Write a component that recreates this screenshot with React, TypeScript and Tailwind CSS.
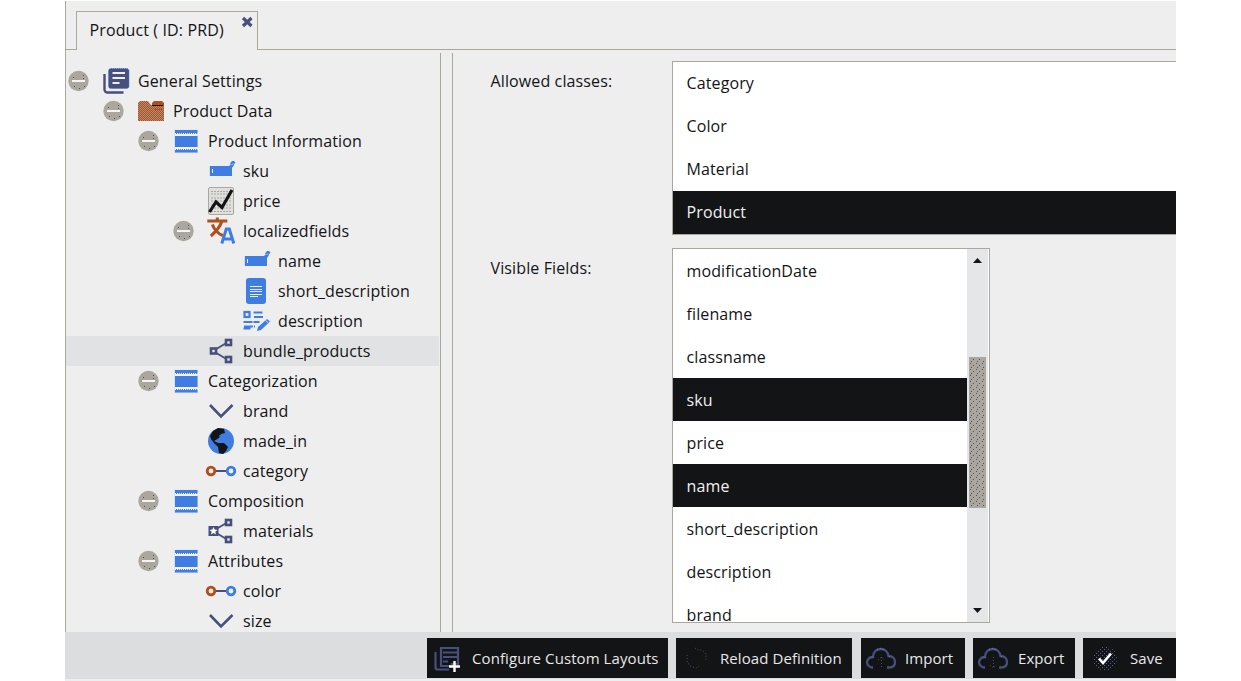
import type { ReactNode } from 'react';

type IconName = 'layers' | 'folder' | 'fieldset' | 'input' | 'chart' | 'translate' | 'textarea' | 'wysiwyg' | 'relations' | 'select' | 'globe' | 'relation' | 'advanced';

const NAVY = '#474f7d';
const BLUE = '#3f7de3';
const RUST = '#ae4f1d';
const STONE = '#aca79d';
const INK = '#131416';

const icons: Record<IconName, ReactNode> = {
  layers: (
    <>
      <path d="M4.500 8v15.500a3 3 0 0 0 3 3H23.500" fill="none" stroke={NAVY} strokeWidth="2.400" />
      <rect x="8.500" y="2.500" width="20.500" height="20" rx="2.500" fill={NAVY} />
      <rect x="8.500" y="2.500" width="20.500" height="20" rx="2.500" fill="none" stroke={BLUE} strokeDasharray="1 1" />
      <path d="M12.500 7h12.500M12.500 12h12.500M12.500 17h7" stroke="#ededed" strokeWidth="2" />
    </>
  ),
  folder: (
    <>
      <path d="M3 7l2-2h8l3 4h13v16H3z" fill="url(#weave)" />
      <path d="M17 9.500V7l2-2h8l2 2v3H17z" fill={RUST} />
      <path d="M17 9.500h11" stroke={INK} />
      <path d="M20 13.500h8M22 16.500h5" stroke={RUST} strokeDasharray="1 1" />
    </>
  ),
  fieldset: (
    <>
      <path d="M4 3.500h24v23.500H4z" fill="#dddede" />
      <path d="M5 4h22.500v3H5zM5 10h22.500v11H5zM5 24h22.500v2.500H5z" fill={BLUE} />
      <path d="M5 8.500h22.500M5 22.500h22.500" stroke="#f3f3f3" strokeWidth="3" />
      <path d="M6 7.500h21M6 23.500h21" stroke={BLUE} strokeDasharray="1 1" />
    </>
  ),
  input: (
    <>
      <path d="M5 10h19l3-3 2 2-2 3v8H5z" fill={BLUE} />
      <path d="M25 7.500l2-2.500h2l1.500 1.500-2.500 3z" fill={BLUE} />
      <path d="M7.500 13v4" stroke="#edf0f5" />
      <path d="M4.500 10v10" stroke="#d5dbe7" />
      <path d="M26.500 9l1.500-1.500" stroke="#c8d6f2" />
    </>
  ),
  chart: (
    <>
      <rect x="3.500" y="1.500" width="25" height="27" rx="1.500" fill="#dfdfdf" stroke={STONE} />
      <path d="M6 5.500h20M6 8h20M6 12h20M6 15h20M6 19h20M6 22h20M6 25.500h20" stroke={STONE} strokeDasharray="2 1" />
      <path d="M4.500 26l6.500-10 6 5.500L27 4" fill="none" stroke={INK} strokeWidth="3.200" />
    </>
  ),
  translate: (
    <g transform="translate(-.7 -.5)">
      <path d="M3 5.500h20M13 2v4M6.500 20.500C10.500 17 15.500 12 17.500 6M8 9c2 5 5 9 10.500 11" fill="none" stroke={RUST} strokeWidth="3" />
      <path d="M17.500 28l4.500-14.500h3l4.500 14.500M19.500 23.500h8" fill="none" stroke={BLUE} strokeWidth="3" />
    </g>
  ),
  textarea: (
    <>
      <rect x="6" y="2" width="20" height="26" rx="3" fill={BLUE} />
      <path d="M10 10.500h12M10 13.500h12M10 15.500h12M10 18.500h12M10 20.500h8" stroke="#e5edfc" />
    </>
  ),
  wysiwyg: (
    <>
      <rect x="4.500" y="6" width="5" height="5" fill="none" stroke={BLUE} strokeWidth="2.200" />
      <path d="M13.500 6.500h10M14 11h10M3.500 16h16M4 20.500h11M3.500 22.500h7" stroke={BLUE} strokeWidth="2" strokeDasharray="9 1" />
      <path d="M17 25l1-4 9-8 3 2.500-9 8.500z" fill={BLUE} />
      <path d="M25.500 14.500l2.500 2" stroke="#dde5f4" />
    </>
  ),
  relations: (
    <>
      <path d="M8 15l15-9M8 15l15 9" stroke={NAVY} strokeWidth="1.800" />
      <g fill="#e7e7e9" stroke={NAVY} strokeWidth="2.600">
        <rect x="6" y="12.500" width="5" height="5" />
        <rect x="21" y="4" width="5" height="5" />
        <rect x="21" y="21" width="5" height="5" />
      </g>
    </>
  ),
  select: (
    <path d="M5 9L16 20.500 27.500 9" fill="none" stroke={NAVY} strokeWidth="2.600" />
  ),
  globe: (
    <>
      <circle cx="16" cy="15" r="13" fill={BLUE} />
      <path d="M5 10l3-5 5-3 6 1 1 4-4 1-2 4-5 3 4 2 6 0 4 4-2 4-3 3-4-1-1-6-4-4-3-4z" fill={INK} />
      <path d="M14 10l3-1 5-2" stroke={BLUE} />
    </>
  ),
  relation: (
    <>
      <path d="M10 15h12" stroke={NAVY} strokeWidth="2" />
      <circle cx="6" cy="15" r="3.800" fill="#f3ece9" stroke={RUST} strokeWidth="2.800" />
      <circle cx="26" cy="15" r="3.800" fill="#edf0f7" stroke={BLUE} strokeWidth="2.800" />
    </>
  ),
  advanced: (
    <>
      <path d="M8 15l15-9M8 15l15 9" stroke={NAVY} strokeWidth="1.800" />
      <rect x="3.500" y="10" width="10" height="10" fill={NAVY} />
      <path d="M8.500 11l1.100 2.600 2.900.3-2.200 1.800.7 2.800-2.500-1.500-2.500 1.500.7-2.800-2.200-1.800 2.900-.3z" fill="#fff" />
      <g fill="#e7e7e9" stroke={NAVY} strokeWidth="2.600">
        <rect x="21" y="4" width="5" height="5" />
        <rect x="21" y="21" width="5" height="5" />
      </g>
    </>
  ),
};

interface Node {
  label: string;
  icon: IconName;
  pad: string;
  branch?: boolean;
  active?: boolean;
}

const L = ['pl-[2px]', 'pl-[37px]', 'pl-[72px]', 'pl-[107px]', 'pl-[142px]'];

const nodes: Node[] = [
  { label: 'General Settings', icon: 'layers', pad: L[0], branch: true },
  { label: 'Product Data', icon: 'folder', pad: L[1], branch: true },
  { label: 'Product Information', icon: 'fieldset', pad: L[2], branch: true },
  { label: 'sku', icon: 'input', pad: L[3] },
  { label: 'price', icon: 'chart', pad: L[3] },
  { label: 'localizedfields', icon: 'translate', pad: L[3], branch: true },
  { label: 'name', icon: 'input', pad: L[4] },
  { label: 'short_description', icon: 'textarea', pad: L[4] },
  { label: 'description', icon: 'wysiwyg', pad: L[4] },
  { label: 'bundle_products', icon: 'relations', pad: L[3], active: true },
  { label: 'Categorization', icon: 'fieldset', pad: L[2], branch: true },
  { label: 'brand', icon: 'select', pad: L[3] },
  { label: 'made_in', icon: 'globe', pad: L[3] },
  { label: 'category', icon: 'relation', pad: L[3] },
  { label: 'Composition', icon: 'fieldset', pad: L[2], branch: true },
  { label: 'materials', icon: 'advanced', pad: L[3] },
  { label: 'Attributes', icon: 'fieldset', pad: L[2], branch: true },
  { label: 'color', icon: 'relation', pad: L[3] },
  { label: 'size', icon: 'select', pad: L[3] },
];

function Collapse() {
  return (
    <svg width="21" height="30" viewBox="0 0 21 30">
      <circle cx="10.500" cy="15" r="10.200" fill={STONE} />
      <path d="M4 15h13" stroke="#f4f4f4" strokeWidth="2" />
      <path d="M5 11h1v1H5zM15 9h1v1h-1zM6 20h1v1H6zM11 22h1v1h-1zM16 20h1v1h-1zM15 12h1v1h-1z" fill={NAVY} />
    </svg>
  );
}

function TreeRow({ node }: { node: Node }) {
  return (
    <div className={`flex h-[30px] w-[373px] shrink-0 items-center ${node.pad} ${node.active ? 'bg-[#e1e2e3]' : ''}`}>
      <div className="w-8 shrink-0">{node.branch && <Collapse />}</div>
      <svg className="mr-[6px] shrink-0" width="32" height="30" viewBox="0 0 32 30">{icons[node.icon]}</svg>
      <span>{node.label}</span>
    </div>
  );
}

function Option({ label, selected, raised }: { label: string; selected?: boolean; raised?: boolean }) {
  return (
    <div className={`flex h-[43px] shrink-0 items-center pl-[13.5px] ${raised ? 'pb-[2px]' : ''} ${selected ? 'bg-[#131416] text-[#f0f0f0]' : ''}`}>
      {label}
    </div>
  );
}

function Cloud() {
  return (
    <>
      <path d="M8 26.500H6.500C2.500 25.500 1.500 22 2.500 19.500 3.500 17 6 16 8 16c0-5 3.500-8 8-8 4 0 7 3 7.500 7 4 0 6.500 2.500 6.500 6 0 3.500-2.500 5.500-6 5.500h-2" fill="none" stroke={NAVY} strokeWidth="2.300" />
      <path d="M7 16.500l2-2M12 9l4-1.500 4 2M24 15.500l3 1" fill="none" stroke="#8b8d99" strokeDasharray="1 2" />
    </>
  );
}

function ToolButton({ label, size, gap, children }: { label: string; size: string; gap: string; children: ReactNode }) {
  return (
    <button className={`flex h-10 shrink-0 items-center whitespace-nowrap bg-[#131416] pl-[5px] text-left text-[15px] tracking-[0.08px] text-[#e8e8e8] ${size} ${gap}`}>
      <svg className="-mt-px shrink-0" width="32" height="34" viewBox="0 0 32 34">{children}</svg>
      <span>{label}</span>
    </button>
  );
}

export default function App() {
  return (
    <div className="h-[681px] w-[1241px] overflow-hidden bg-white pl-[65px] pt-px font-['Open_Sans',sans-serif] text-base leading-[22px] tracking-[0.12px] text-[#131416]">
      <svg className="absolute" width="0" height="0">
        <defs>
          <pattern id="weave" width="2" height="2" patternUnits="userSpaceOnUse">
            <rect width="2" height="2" fill="#b08e77" />
            <path d="M0 0h1v1H0zM1 1h1v1H1z" fill={RUST} />
          </pattern>
          <pattern id="speck" width="6" height="6" patternUnits="userSpaceOnUse">
            <path d="M1 0h1v1H1zM4 2h1v1H4zM2 4h1v1H2z" fill={NAVY} />
          </pattern>
          <pattern id="dots" width="4" height="4" patternUnits="userSpaceOnUse">
            <path d="M0 0h1v1H0zM2 2h1v1H2z" fill="#5a629a" />
          </pattern>
        </defs>
      </svg>
      <div className="flex h-[680px] w-[1111px] flex-col bg-[#eeeeee]">
        <header className="flex h-[49px] shrink-0 border-l border-[#aca79d]">
          <div className="w-[10px] border-b border-[#aca79d]" />
          <div className="mt-[10px] flex w-[182px] border-x border-t border-[#aca79d] pl-[12.5px] pt-[7px]">
            <span className="w-[151px]">Product ( ID: PRD)</span>
            <svg className="-mt-[3px]" width="12" height="12" viewBox="0 0 12 12">
              <path d="M2 2l8.500 8M10.500 2l-8.500 8" stroke={NAVY} strokeWidth="3.200" />
            </svg>
          </div>
          <div className="flex-1 border-b border-[#aca79d]" />
        </header>
        <main className="flex h-[582px] shrink-0">
          <aside className="flex w-[375px] flex-col overflow-hidden border-l border-[#aca79d] pt-4">
            {nodes.map((n, i) => <TreeRow key={i} node={n} />)}
          </aside>
          <div className="mt-[3px] w-[13px] border-x border-[#aca79d]" />
          <section className="flex flex-1 flex-col overflow-hidden pl-[37.5px] pt-[11px]">
            <div className="flex">
              <span className="w-[181.5px] pt-[9px]">Allowed classes:</span>
              <div className="flex-1 border-y border-l border-[#aca79d] bg-white">
                <Option label="Category" raised />
                <Option label="Color" raised />
                <Option label="Material" raised />
                <Option label="Product" selected raised />
              </div>
            </div>
            <div className="mt-[13px] flex">
              <span className="w-[181.5px] pt-[9px]">Visible Fields:</span>
              <div className="flex h-[375px] w-[318px] border border-[#aca79d] bg-white">
                <div className="flex w-[294px] flex-col overflow-hidden">
                  <Option label="modificationDate" />
                  <Option label="filename" />
                  <Option label="classname" />
                  <Option label="sku" selected />
                  <Option label="price" />
                  <Option label="name" selected />
                  <Option label="short_description" />
                  <Option label="description" />
                  <Option label="brand" />
                </div>
                <div className="flex w-[21px] flex-col items-center bg-[#e5e6e7]">
                  <svg className="mt-[9px]" width="9" height="5" viewBox="0 0 9 5"><path d="M4.500 0L9 5H0z" fill={INK} /></svg>
                  <svg className="mt-[94px] bg-[#aca79d]" width="17" height="151"><rect x="1" y="1" width="15" height="149" fill="url(#speck)" /></svg>
                  <svg className="mt-[100px]" width="9" height="5" viewBox="0 0 9 5"><path d="M0 0h9L4.500 5z" fill={INK} /></svg>
                </div>
              </div>
            </div>
          </section>
        </main>
        <footer className="flex h-[47px] shrink-0 justify-end bg-[#dcddde] pt-[6px]">
          <ToolButton label="Configure Custom Layouts" size="w-[241px] mr-2" gap="gap-[8px]">
            <path d="M3.500 11v15.500a2 2 0 0 0 2 2H17" fill="none" stroke={NAVY} strokeWidth="2.200" />
            <path d="M9 7h17v16h-6v2H9z" fill="none" stroke={NAVY} strokeWidth="2.200" />
            <path d="M11 11.500h14M11 16h14M11 20.500h5" stroke={NAVY} strokeWidth="2" />
            <path d="M22.500 20v11M17 25.500h11" stroke="#fff" strokeWidth="2.400" />
          </ToolButton>
          <ToolButton label="Reload Definition" size="w-[176px] mr-[9px]" gap="gap-[7px]">
            <path d="M14 7l3 2 4 0 4 4v6M6 14v6l3 5 6 2 3-2" fill="none" stroke={NAVY} strokeDasharray="1 2" />
          </ToolButton>
          <ToolButton label="Import" size="w-[104px] mr-2" gap="gap-[7px]">
            <g transform="translate(-1 0)">
              <Cloud />
              <path d="M16.500 16v12M13 19l3.500-3 3.500 3" fill="none" stroke={NAVY} strokeDasharray="1 2" />
            </g>
          </ToolButton>
          <ToolButton label="Export" size="w-[102px] mr-2" gap="gap-[8px]">
            <g transform="translate(-1 0)">
              <Cloud />
              <path d="M16.500 16v12M13 24l3.500 3 3.500-3" fill="none" stroke={NAVY} strokeDasharray="1 2" />
            </g>
          </ToolButton>
          <ToolButton label="Save" size="w-[93px]" gap="gap-[10px]">
            <circle cx="17" cy="17.500" r="12" fill="url(#dots)" />
            <path d="M11 17.500l4 4.500 8-9.500" fill="none" stroke="#fff" strokeWidth="2.600" />
          </ToolButton>
        </footer>
      </div>
    </div>
  );
}
